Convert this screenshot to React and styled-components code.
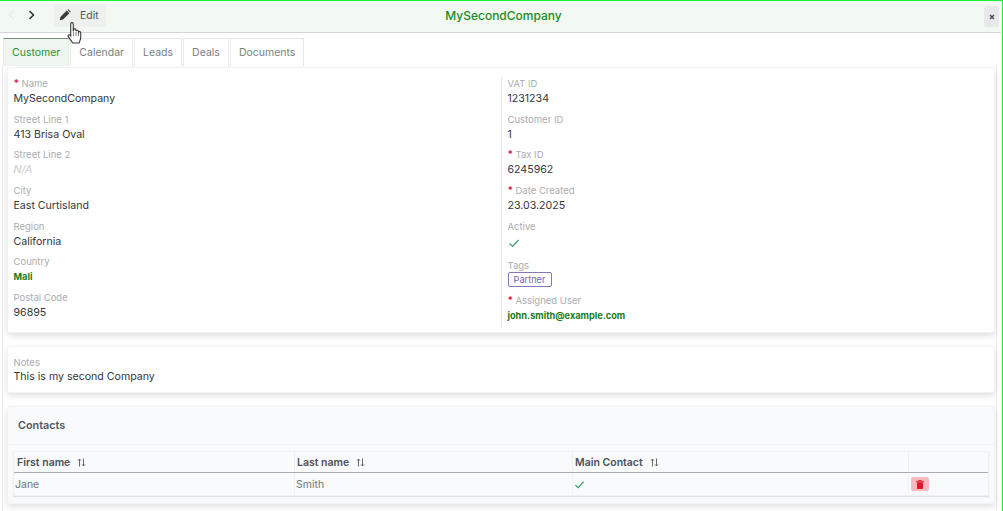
import React from "react";
import styled, { createGlobalStyle } from "styled-components";

const Global = createGlobalStyle`
  html, body { margin: 0; padding: 0; background: #fff; overflow: hidden; }
  * { box-sizing: border-box; }
  body { font-family: "Inter", "Liberation Sans", sans-serif; color: #2b2f36; }
`;
const Frame = styled.div`
  position: relative; width: 1003px; height: 511px; overflow: hidden;
  border-top: 1px solid #19f03c; border-right: 1px solid #19f03c;
  padding-right: 1px; background: #fff; display: flex; flex-direction: column;
`;
const Header = styled.header`
  height: 32px; flex: none; display: grid; grid-template-columns: 1fr auto 1fr; align-items: center; padding: 0 2px 0 8px;
  background: #f2f8f2; border-bottom: 1px solid #d3d5d4;
`;
const HeaderLeft = styled.div`
  display: flex; align-items: center;
`;
const HeaderRight = styled.div`
  display: flex; justify-content: flex-end;
`;
const Nav = styled.div`
  width: 46px; display: flex; align-items: center; gap: 13px; padding-bottom: 4px;
`;
const EditButton = styled.div`
  width: 52px; height: 23px; margin-top: -3px; display: flex; align-items: center; gap: 9px; padding-left: 5px;
  background: #ecf1ed; border-radius: 3px; font-size: 10.5px; color: #555;
`;
const Title = styled.div`
  text-align: center; color: #1d8a27; font-size: 12px; font-weight: 500; padding-bottom: 3px;
`;
const CloseButton = styled.div`
  width: 15px; height: 21px; background: #e6e8ea; border-radius: 3px; display: flex; align-items: center; justify-content: center;
`;
const Cursor = styled.svg`
  position: absolute; left: 67px; top: 20px;
`;
const Tabs = styled.nav`
  display: flex; flex: none; padding: 5px 0 0 3px; gap: 1px; height: 33px;
`;
const Tab = styled.div`
  height: 28px; padding: 0 8px; display: flex; align-items: center; font-size: 10.5px;
  color: ${p => (p.$active ? "#2a9136" : "#7b7e83")};
  background: ${p => (p.$active ? "#eff6ef" : "#fff")};
  border: 1px solid #e8eaea; border-bottom: none;
  border-top-color: ${p => (p.$active ? "#7b8d7d" : "#e4e6e6")};
`;
const Page = styled.main`
  flex: 1; margin: 0 4px 0 2px; padding: 1px 1px 0 4px; display: flex; flex-direction: column; gap: 13px;
  border-left: 1px solid #eceaf0; border-right: 1px solid #e8eef2;
`;
const Card = styled.section`
  background: ${p => (p.$tint ? "#f9fafb" : "#fff")}; border: 1px solid #f2f3f3; border-radius: 3px;
  box-shadow: 0 3px 6px rgba(0,0,0,.12);
`;
const Columns = styled.div`
  display: grid; grid-template-columns: 493px 1fr; height: 264px; padding-top: 9px;
`;
const Column = styled.div`
  padding-left: 5.500px;
  border-left: ${p => (p.$right ? "1px solid #e6e7e8" : "none")};
  height: 251px;
`;
const Field = styled.div`
  height: ${p => p.$h || 35.7}px;
`;
const Label = styled.div`
  font-size: 9.5px; line-height: 12px; color: #a9acb0;
  &::before { content: ${p => (p.$req ? '"* "' : '""')}; color: #d9234a; font-size: 10px; font-weight: 700; }
`;
const Value = styled.div`
  font-size: 10.6px; line-height: ${p => p.$lh || 17}px; color: ${p => (p.$muted ? "#c9cbce" : "#33363c")};
  font-style: ${p => (p.$muted ? "italic" : "normal")};
`;
const CheckValue = styled.div`
  height: 17px; padding-top: 4px; display: flex; align-items: flex-start;
`;
const LinkValue = styled.div`
  font-size: 9.2px; line-height: 17px; font-weight: 700; color: #197a22;
`;
const Tag = styled.span`
  display: block; width: 44px; height: 15px; line-height: 13px; text-align: center;
  border: 1px solid #8577b5; border-radius: 2px; font-size: 9.2px; color: #7566ac;
`;
const Notes = styled.div`
  height: 45px; padding: 9px 5.500px 0;
`;
const ContactsTitle = styled.div`
  height: 38px; padding: 0 10px; display: flex; align-items: center;
  font-size: 10.8px; font-weight: 600; color: #53575e; border-bottom: 1px solid #eef0f1;
`;
const TableWrap = styled.div`
  padding: 6px 5px 7px 5px;
`;
const Table = styled.div`
  border: 1px solid #eff0f1; box-shadow: 0 1px 1px rgba(0,0,0,.1);
`;
const Row = styled.div`
  display: grid; grid-template-columns: 280px 278px 336px 1fr; height: ${p => (p.$head ? 21 : 22)}px;
  border-bottom: ${p => (p.$head ? "1px solid #a9adb2" : "none")};
`;
const HeadCell = styled.div`
  display: flex; align-items: center; gap: 7px; padding-left: 3px; font-size: 10.5px; font-weight: 600; color: #4c5059;
  & + & { border-left: 1px solid #eceef0; padding-left: 2px; }
`;
const Cell = styled.div`
  display: flex; align-items: center; padding-left: 1px; font-size: 10.5px; color: #73767c;
  & + & { border-left: 1px solid #f0f1f2; }
`;
const DeleteButton = styled.div`
  width: 18px; height: 14px; margin-left: 1px; border-radius: 2px; background: #f9b9bf; display: flex; align-items: center; justify-content: center;
`;

const Check = ({ size = 12 }) => (
  <svg width={size} height={size} viewBox="0 0 12 12" fill="none"><path d="M1.500 6.500 L4.600 9.400 L10.500 3" stroke="#3aa06c" strokeWidth="1.300" /></svg>
);
const Sort = () => (
  <svg width="9" height="9" viewBox="0 0 9 9" fill="none" stroke="#555a62" strokeWidth="0.9">
    <path d="M2.500 8.500V1M1 2.600 2.500 1 4 2.600M6.500 0.500V8M5 6.400 6.500 8 8 6.400" />
  </svg>
);
const Field2 = ({ label, req, children, h }) => (
  <Field $h={h}><Label $req={req}>{label}</Label>{children}</Field>
);

export default function App() {
  return (
    <Frame>
      <Global />
      <Header>
        <HeaderLeft>
          <Nav>
            <svg width="7" height="10" viewBox="0 0 7 10" fill="none"><path d="M5.500 1 1.500 5l4 4" stroke="#e8ebe9" strokeWidth="1.600" /></svg>
            <svg width="7" height="10" viewBox="0 0 7 10" fill="none"><path d="M1.500 1l4 4-4 4" stroke="#2b2f34" strokeWidth="1.500" /></svg>
          </Nav>
          <EditButton>
            <svg width="12" height="12" viewBox="0 0 12 12"><path d="M0.800 11.200 1.400 8 7.800 1.600 10.400 4.200 4 10.600ZM8.600 0.900 9.400 0.200 11.800 2.600 11.100 3.400Z" fill="#3a3a3a" /></svg>
            <span>Edit</span>
          </EditButton>
        </HeaderLeft>
        <Title>MySecondCompany</Title>
        <HeaderRight>
          <CloseButton>
            <svg width="6" height="6" viewBox="0 0 6 6"><path d="M1 1l4 4M5 1 1 5" stroke="#444" strokeWidth="1.300" /></svg>
          </CloseButton>
        </HeaderRight>
      </Header>
      <Cursor width="17" height="26" viewBox="0 0 16 24">
        <path d="M3.500 2.500c0-1.600 2.400-1.600 2.400 0v7l.2-1.500c.3-1.200 2.200-1.100 2.300.2l.1 1c.3-1.100 2.100-1 2.200.3l.1.8c.4-.9 2-.7 2.100.5.2 2 .1 4.300-.3 6-.3 1.500-.7 2.500-1.300 3.700H5.500C4 18.500 2.500 16.500 1.200 14.500c-.7-1.300.8-2.500 1.800-1.300l.5.600Z" fill="#fff" stroke="#333" strokeWidth="1" />
        <path d="M6.200 10v4M8.500 10v4M10.800 10.500v3.500" stroke="#555" strokeWidth=".7" fill="none" />
      </Cursor>
      <Tabs>
        <Tab $active>Customer</Tab>
        <Tab>Calendar</Tab>
        <Tab>Leads</Tab>
        <Tab>Deals</Tab>
        <Tab>Documents</Tab>
      </Tabs>
      <Page>
        <Card>
          <Columns>
            <Column>
              <Field2 label="Name" req><Value>MySecondCompany</Value></Field2>
              <Field2 label="Street Line 1"><Value>413 Brisa Oval</Value></Field2>
              <Field2 label="Street Line 2"><Value $muted>N/A</Value></Field2>
              <Field2 label="City"><Value>East Curtisland</Value></Field2>
              <Field2 label="Region"><Value>California</Value></Field2>
              <Field2 label="Country"><LinkValue>Mali</LinkValue></Field2>
              <Field2 label="Postal Code"><Value>96895</Value></Field2>
            </Column>
            <Column $right>
              <Field2 label="VAT ID"><Value>1231234</Value></Field2>
              <Field2 label="Customer ID"><Value>1</Value></Field2>
              <Field2 label="Tax ID" req><Value>6245962</Value></Field2>
              <Field2 label="Date Created" req><Value>23.03.2025</Value></Field2>
              <Field2 label="Active" h={39}><CheckValue><Check /></CheckValue></Field2>
              <Field2 label="Tags" h={35}><Tag>Partner</Tag></Field2>
              <Field2 label="Assigned User" req><LinkValue>john.smith@example.com</LinkValue></Field2>
            </Column>
          </Columns>
        </Card>
        <Card>
          <Notes>
            <Label>Notes</Label>
            <Value $lh={16}>This is my second Company</Value>
          </Notes>
        </Card>
        <Card $tint>
          <ContactsTitle>Contacts</ContactsTitle>
          <TableWrap>
            <Table>
              <Row $head>
                <HeadCell>First name <Sort /></HeadCell>
                <HeadCell>Last name <Sort /></HeadCell>
                <HeadCell>Main Contact <Sort /></HeadCell>
                <HeadCell />
              </Row>
              <Row>
                <Cell>Jane</Cell>
                <Cell>Smith</Cell>
                <Cell><Check size={11} /></Cell>
                <Cell>
                  <DeleteButton>
                    <svg width="8" height="9" viewBox="0 0 8 9"><path d="M0 1.200h8v1H0ZM2.500 0h3v1h-3ZM1 2.600h6V8.300a.7.7 0 0 1-.7.7H1.700a.7.7 0 0 1-.7-.7Z" fill="#e0162e" /></svg>
                  </DeleteButton>
                </Cell>
              </Row>
            </Table>
          </TableWrap>
        </Card>
      </Page>
    </Frame>
  );
}
